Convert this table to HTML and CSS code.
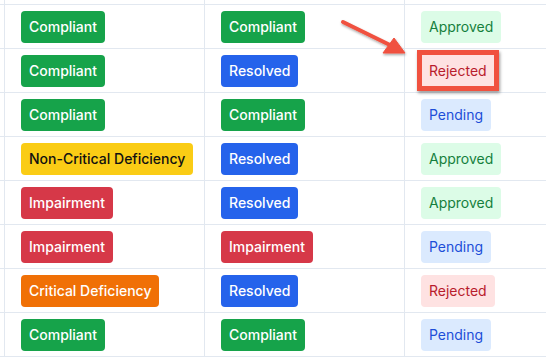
FILE: index.html
```html
<!DOCTYPE html>
<html>
<head>
<meta charset="UTF-8">
<title>Inspection results</title>
<link rel="stylesheet" href="styles.css">
</head>
<body>
<div class="table">
<div class="row head">
<div class="cell"></div><div class="cell"></div><div class="cell"></div><div class="cell"></div>
</div>
<div class="row">
<div class="cell"></div>
<div class="cell"><span class="badge green">Compliant</span></div>
<div class="cell"><span class="badge green">Compliant</span></div>
<div class="cell"><span class="badge soft-green">Approved</span></div>
</div>
<div class="row">
<div class="cell"></div>
<div class="cell"><span class="badge green">Compliant</span></div>
<div class="cell"><span class="badge blue">Resolved</span></div>
<div class="cell"><span class="badge soft-red marked">Rejected</span></div>
</div>
<div class="row">
<div class="cell"></div>
<div class="cell"><span class="badge green">Compliant</span></div>
<div class="cell"><span class="badge green">Compliant</span></div>
<div class="cell"><span class="badge soft-blue">Pending</span></div>
</div>
<div class="row">
<div class="cell"></div>
<div class="cell"><span class="badge yellow">Non-Critical Deficiency</span></div>
<div class="cell"><span class="badge blue">Resolved</span></div>
<div class="cell"><span class="badge soft-green">Approved</span></div>
</div>
<div class="row">
<div class="cell"></div>
<div class="cell"><span class="badge red">Impairment</span></div>
<div class="cell"><span class="badge blue">Resolved</span></div>
<div class="cell"><span class="badge soft-green">Approved</span></div>
</div>
<div class="row">
<div class="cell"></div>
<div class="cell"><span class="badge red">Impairment</span></div>
<div class="cell"><span class="badge red">Impairment</span></div>
<div class="cell"><span class="badge soft-blue">Pending</span></div>
</div>
<div class="row">
<div class="cell"></div>
<div class="cell"><span class="badge orange">Critical Deficiency</span></div>
<div class="cell"><span class="badge blue">Resolved</span></div>
<div class="cell"><span class="badge soft-red">Rejected</span></div>
</div>
<div class="row">
<div class="cell"></div>
<div class="cell"><span class="badge green">Compliant</span></div>
<div class="cell"><span class="badge green">Compliant</span></div>
<div class="cell"><span class="badge soft-blue">Pending</span></div>
</div>
</div>
<!-- pointer arrow toward the rejected entry -->
<svg class="arrow" width="546" height="360" viewBox="0 0 546 360">
<defs>
<filter id="shade" x="-20%" y="-20%" width="140%" height="160%">
<feDropShadow dx="0.5" dy="1.5" stdDeviation="1.2" flood-color="#000" flood-opacity="0.35"/>
</filter>
</defs>
<g filter="url(#shade)" fill="#f0513f" stroke="#f0513f">
<line x1="343" y1="22" x2="392" y2="46" stroke-width="4" stroke-linecap="round"/>
<polygon points="405,53 383,53 394,38" stroke-width="1" stroke-linejoin="round"/>
</g>
</svg>
</body>
</html>
```

FILE: styles.css
```css
body{
margin:0;
background:#fff;
font-family:Inter,"Liberation Sans",sans-serif;
overflow:hidden;
}
.table{
width:560px;
}
.row{
display:grid;
grid-template-columns:4px 200px 200px 1fr;
height:44px;
border-bottom:1px solid #e2e8f0;
box-sizing:border-box;
}
.row.head{
height:5px;
}
.cell{
display:flex;
align-items:center;
padding-left:16px;
border-left:1px solid #e2e8f0;
box-sizing:border-box;
}
.cell:first-child{
border-left:none;
padding:0;
}
.badge{
position:relative;
display:inline-block;
padding:6px 8px;
font-size:14px;
line-height:20px;
font-weight:500;
border-radius:4px;
white-space:nowrap;
}
.green{ background:#16a34a; color:#fff; }
.blue{ background:#2563eb; color:#fff; }
.red{ background:#d63848; color:#fff; }
.orange{ background:#f07006; color:#fff; }
.yellow{ background:#facc15; color:#111; }
.soft-green{ background:#dcfce7; color:#15803d; font-weight:400; }
.soft-red{ background:#fee2e2; color:#b91c2c; font-weight:400; }
.soft-blue{ background:#dbeafe; color:#1d4ed8; font-weight:400; }
.marked{
border-radius:0;
}
.marked:after{
content:"";
position:absolute;
top:-5px;
left:-4px;
right:-4px;
bottom:-4px;
border:5px solid #f0513f;
box-shadow:1px 2px 3px rgba(0,0,0,0.4);
}
.arrow{
position:absolute;
left:0;
top:0;
pointer-events:none;
}
```
